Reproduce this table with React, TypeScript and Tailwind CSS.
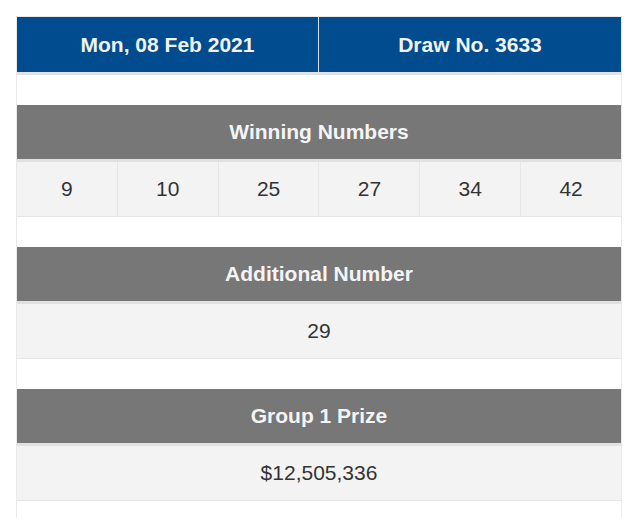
import React from 'react';

const WINNING = [9, 10, 25, 27, 34, 42];

function SectionHeader({ title }: { title: string }) {
  return (
    <div className="h-[57px] flex items-center justify-center bg-[#777777] border-b-[3px] border-[#e1e1e1] text-[21px] font-bold text-[#f4f4f4]">
      {title}
    </div>
  );
}

function Section({ title, children }: { title: string; children: React.ReactNode }) {
  return (
    <div className="mt-[30px]">
      <SectionHeader title={title} />
      <div className="h-[55px] flex bg-[#f3f3f3] border-b border-[#e6e6e6] text-[21px] text-[#333333]">
        {children}
      </div>
    </div>
  );
}

export default function App() {
  return (
    <div className="min-h-[518px] bg-white pt-4 pl-4" style={{ fontFamily: '"Liberation Sans", Arial, sans-serif' }}>
      <div className="w-[606px] min-h-[520px] border border-[#e9e9e9]">
        <div className="h-[58px] grid grid-cols-2 bg-[#004c8e] border-b-[3px] border-[#e3e3e3] text-[21px] font-bold text-[#f2f2f2]">
          <div className="flex items-center justify-center border-r border-[#d9e2ec]">Mon, 08 Feb 2021</div>
          <div className="flex items-center justify-center">Draw No. 3633</div>
        </div>

        <Section title="Winning Numbers">
          {WINNING.map((n, i) => (
            <div
              key={n}
              className={`flex-1 flex items-center justify-center ${i < WINNING.length - 1 ? 'border-r border-[#e6e6e6]' : ''}`}
            >
              {n}
            </div>
          ))}
        </Section>

        <Section title="Additional Number">
          <div className="flex-1 flex items-center justify-center">29</div>
        </Section>

        <Section title="Group 1 Prize">
          <div className="flex-1 flex items-center justify-center">$12,505,336</div>
        </Section>
      </div>
    </div>
  );
}
